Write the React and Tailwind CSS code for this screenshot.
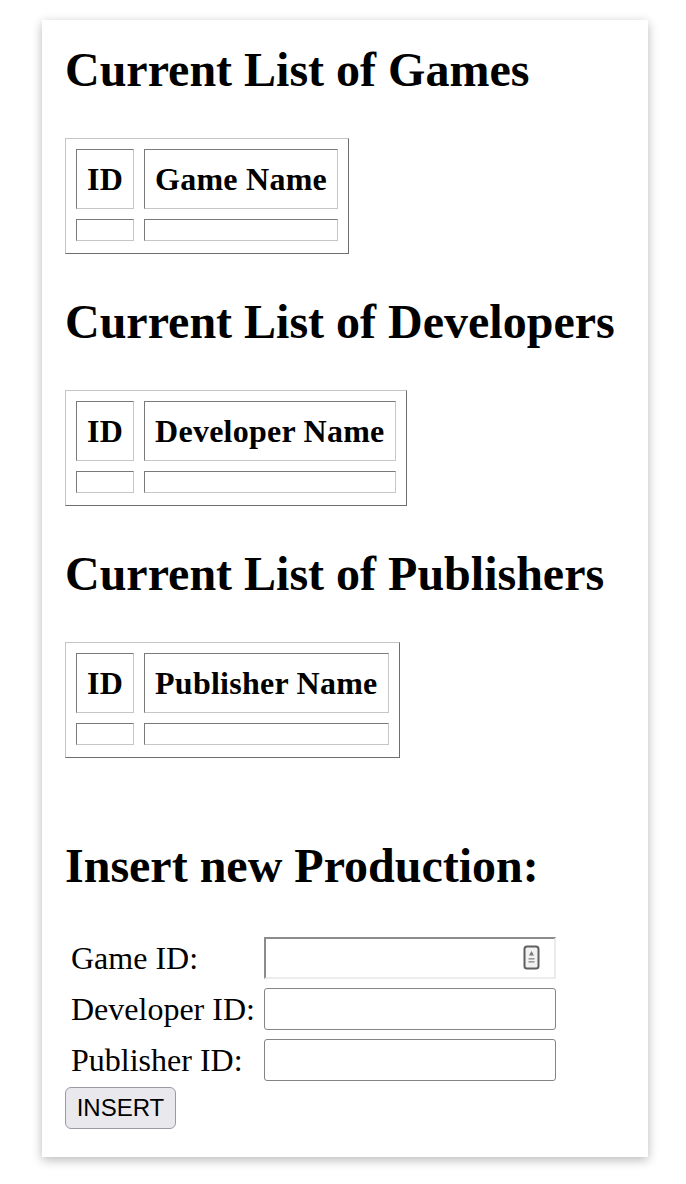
import { useState } from 'react'

// Old-school listing page: three empty lookup tables and an insert form
const LISTS = [
  { title: 'Current List of Games', column: 'Game Name' },
  { title: 'Current List of Developers', column: 'Developer Name' },
  { title: 'Current List of Publishers', column: 'Publisher Name' },
]

const cell =
  'border border-t-[#7a7a7a] border-l-[#7a7a7a] border-r-[#c6c6c6] border-b-[#c6c6c6]'

function ListTable({ column }) {
  return (
    <table className="mt-[40px] border-separate border-spacing-[10px] border border-t-[#c4c4c4] border-l-[#c4c4c4] border-r-[#6e6e6e] border-b-[#6e6e6e] pb-[2px]">
      <thead>
        <tr>
          <th className={`${cell} p-[10px] text-[32px] font-bold leading-[38px] tracking-[0.25px] text-black`}>ID</th>
          <th className={`${cell} p-[10px] text-[32px] font-bold leading-[38px] tracking-[0.25px] text-black`}>{column}</th>
        </tr>
      </thead>
      <tbody>
        <tr>
          <td className={`${cell} p-[10px]`}></td>
          <td className={`${cell} p-[10px]`}></td>
        </tr>
      </tbody>
    </table>
  )
}

function ContactIcon() {
  return (
    <svg width="17" height="25" viewBox="0 0 17 25" className="absolute right-[16px] top-[8px]">
      <rect x="1.5" y="1.5" width="14" height="22" rx="2.5" fill="#f2f2f2" stroke="#5f5f5f" strokeWidth="2" />
      <path d="M8.5 6 L11 10.5 H6 Z" fill="#7a7a7a" />
      <rect x="5.5" y="13" width="6" height="1.6" fill="#9a9a9a" />
      <rect x="5.5" y="16" width="6" height="1.6" fill="#9a9a9a" />
    </svg>
  )
}

export default function App() {
  const [form, setForm] = useState({ game: '', developer: '', publisher: '' })
  const set = (k) => (e) => setForm({ ...form, [k]: e.target.value })

  return (
    <div className="min-h-[1184px] bg-white pt-[20px] font-['Liberation_Serif','Times_New_Roman',serif] text-black">
      <div className="ml-[42px] w-[606px] bg-white pl-[23px] pt-[22px] pb-[28px] shadow-[0_3px_10px_rgba(0,0,0,0.28)]">
        {LISTS.map((l, i) => (
          <div key={l.title} className={i === 0 ? '' : 'mt-[40px]'}>
            <h2 className="text-[48px] font-bold leading-[56px]">{l.title}</h2>
            <ListTable column={l.column} />
          </div>
        ))}

        <h2 className="mt-[80px] text-[48px] font-bold leading-[56px]">Insert new Production:</h2>

        <form className="mt-[43px]" onSubmit={(e) => e.preventDefault()}>
          <div className="ml-[6px] grid grid-cols-[193px_292px] items-center gap-y-[9px]">
            <label className="text-[32px] leading-[37px]">Game ID:</label>
            <div className="relative h-[42px]">
              <input
                value={form.game}
                onChange={set('game')}
                className="h-full w-full border-2 border-t-[#8c8c8c] border-l-[#8c8c8c] border-r-[#ececec] border-b-[#ececec] bg-white px-2 outline-none"
              />
              <ContactIcon />
            </div>
            <label className="text-[32px] leading-[37px]">Developer ID:</label>
            <input
              value={form.developer}
              onChange={set('developer')}
              className="h-[42px] w-full rounded-[3px] border border-[#858585] bg-white px-2 outline-none"
            />
            <label className="text-[32px] leading-[37px]">Publisher ID:</label>
            <input
              value={form.publisher}
              onChange={set('publisher')}
              className="h-[42px] w-full rounded-[3px] border border-[#858585] bg-white px-2 outline-none"
            />
          </div>
          <button
            type="submit"
            className="mt-[6px] flex h-[42px] w-[111px] items-center justify-center rounded-[6px] border border-[#9a9aa6] bg-[#e9e9ed] font-['Liberation_Sans',Arial,sans-serif] text-[24px] text-black"
          >
            INSERT
          </button>
        </form>
      </div>
    </div>
  )
}
